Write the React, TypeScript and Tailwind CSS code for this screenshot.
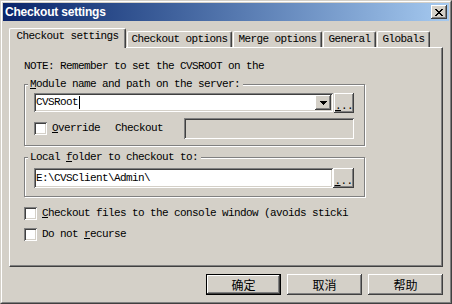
import React from "react";

const mono = "font-['Liberation_Mono',monospace] text-[11px] leading-[13px] tracking-[-0.6px] whitespace-nowrap";
const raised =
  "bg-[#d4d0c8] shadow-[inset_-1px_-1px_#404040,inset_1px_1px_#ffffff,inset_-2px_-2px_#808080,inset_2px_2px_#d4d0c8]";
const sunken =
  "shadow-[inset_1px_1px_#808080,inset_-1px_-1px_#ffffff,inset_2px_2px_#404040,inset_-2px_-2px_#d4d0c8]";
const etched = "border border-[#808080] shadow-[inset_1px_1px_#ffffff,1px_1px_#ffffff]";

function CloseGlyph() {
  const px = [
    [0, 0], [1, 0], [6, 0], [7, 0],
    [1, 1], [2, 1], [5, 1], [6, 1],
    [2, 2], [3, 2], [4, 2], [5, 2],
    [3, 3], [4, 3],
    [2, 4], [3, 4], [4, 4], [5, 4],
    [1, 5], [2, 5], [5, 5], [6, 5],
    [0, 6], [1, 6], [6, 6], [7, 6],
  ];
  return (
    <svg width="8" height="7" viewBox="0 0 8 7" shapeRendering="crispEdges">
      {px.map(([x, y]) => (
        <rect key={`${x}-${y}`} x={x} y={y} width="1" height="1" fill="#000" />
      ))}
    </svg>
  );
}

function Checkbox({ label }: { label: React.ReactNode }) {
  return (
    <div className="flex items-center">
      <div className={`w-[13px] h-[13px] bg-white ${sunken}`} />
      <span className={`${mono} ml-[5px]`}>{label}</span>
    </div>
  );
}

function BrowseButton({ w }: { w: string }) {
  return (
    <div className={`${raised} ${w} h-[20px] flex items-end justify-center pb-[3px] ${mono}`}>
      <span className="leading-[8px]">
        <u>.</u>..
      </span>
    </div>
  );
}

function Group({ label, h, children }: { label: React.ReactNode; h: string; children: React.ReactNode }) {
  return (
    <div className={`relative w-[341px] ${h} ${etched}`}>
      <span className={`${mono} absolute left-[3px] top-[-7px] bg-[#d4d0c8] pl-[2px] pr-[3px]`}>{label}</span>
      {children}
    </div>
  );
}

const tabs = [
  { label: "Checkout options", w: "w-[105px]" },
  { label: "Merge options", w: "w-[89px]" },
  { label: "General", w: "w-[53px]" },
  { label: "Globals", w: "w-[53px]" },
];

export default function App() {
  return (
    <div className="w-[452px] h-[304px] bg-[#d4d0c8] border border-t-[#d4d0c8] border-l-[#d4d0c8] border-r-[#404040] border-b-[#404040] text-black overflow-hidden select-none">
      <div className="h-full border border-t-white border-l-white border-r-[#808080] border-b-[#808080] p-[1px] flex flex-col">
        {/* title bar */}
        <div className="h-[18px] shrink-0 bg-linear-to-r from-[#0a246a] to-[#a6caf0] flex items-center justify-between pl-[2px] pr-[2px]">
          <span className="font-['Liberation_Sans',Arial,sans-serif] font-bold text-[12px] tracking-[-0.2px] text-white leading-[14px]">
            Checkout settings
          </span>
          <div className={`${raised} w-[16px] h-[14px] flex items-center justify-center`}>
            <CloseGlyph />
          </div>
        </div>

        <div className="px-[6px] pt-[7px]">
          {/* tabs */}
          <div className="flex items-end h-[19px] gap-[1px]">
            <div className="relative z-10 w-[117px] h-[20px] mb-[-1px] bg-[#d4d0c8] border-t border-l border-r border-t-white border-l-white border-r-[#404040] shadow-[inset_-1px_0_#808080] rounded-tl-[2px] rounded-tr-[2px] flex justify-center pt-[1px]">
              <span className={mono}>Checkout settings</span>
            </div>
            {tabs.map((t) => (
              <div
                key={t.label}
                className={`${t.w} h-[16px] border-t border-l border-r border-t-white border-l-white border-r-[#404040] shadow-[inset_-1px_0_#808080] rounded-tl-[2px] rounded-tr-[2px] flex justify-center pt-[1px]`}
              >
                <span className={mono}>{t.label}</span>
              </div>
            ))}
          </div>

          {/* tab panel */}
          <div className="w-[434px] h-[220px] border border-t-white border-l-white border-r-[#404040] border-b-[#404040] shadow-[inset_-1px_-1px_#808080] pl-[14px] pt-[12px]">
            <div className={mono}>NOTE: Remember to set the CVSROOT on the</div>

            <div className="mt-[11px]">
              <Group
                h="h-[62px]"
                label={
                  <>
                    <u>M</u>odule name and path on the server:
                  </>
                }
              >
                <div className="pl-[9px] pt-[8px]">
                  <div className="flex items-start gap-[1px]">
                    <div className={`w-[299px] h-[19px] bg-white ${sunken} flex items-center pl-[2px] pr-[2px]`}>
                      <span className={mono}>CVSRoot</span>
                      <span className="w-[1px] h-[13px] bg-black ml-[1px]" />
                      <div className="flex-1" />
                      <div className={`${raised} w-[16px] h-[15px] flex items-center justify-center`}>
                        <svg width="7" height="4" viewBox="0 0 7 4" shapeRendering="crispEdges">
                          <path d="M0 0h7v1h-1v1h-1v1h-1v1h-1v-1h-1v-1h-1v-1h-1z" fill="#000" />
                        </svg>
                      </div>
                    </div>
                    <BrowseButton w="w-[20px]" />
                  </div>
                  <div className="flex items-center h-[21px] mt-[5px]">
                    <Checkbox
                      label={
                        <>
                          <u>O</u>verride
                        </>
                      }
                    />
                    <span className={`${mono} ml-[15px]`}>Checkout</span>
                    <div className={`ml-[21px] w-[170px] h-[21px] ${sunken}`} />
                  </div>
                </div>
              </Group>
            </div>

            <div className="mt-[11px]">
              <Group
                h="h-[40px]"
                label={
                  <>
                    Local <u>f</u>older to checkout to:
                  </>
                }
              >
                <div className="pl-[9px] pt-[10px] flex items-start">
                  <div className={`w-[299px] h-[20px] bg-white ${sunken} flex items-center pl-[2px]`}>
                    <span className={mono}>E:\CVSClient\Admin\</span>
                  </div>
                  <BrowseButton w="w-[21px]" />
                </div>
              </Group>
            </div>

            <div className="mt-[10px]">
              <Checkbox
                label={
                  <>
                    <u>C</u>heckout files to the console window (avoids sticki
                  </>
                }
              />
            </div>
            <div className="mt-[8px]">
              <Checkbox
                label={
                  <>
                    Do not <u>r</u>ecurse
                  </>
                }
              />
            </div>
          </div>

          {/* dialog buttons */}
          <div className="w-[434px] flex justify-end gap-[6px] mt-[7px] font-['Noto_Sans_CJK_SC',sans-serif] text-[12px] leading-[14px]">
            <div className="w-[75px] h-[21px] border border-black">
              <div className={`${raised} w-full h-full flex items-center justify-center`}>确定</div>
            </div>
            <div className={`${raised} w-[75px] h-[21px] flex items-center justify-center`}>取消</div>
            <div className={`${raised} w-[75px] h-[21px] flex items-center justify-center`}>帮助</div>
          </div>
        </div>
      </div>
    </div>
  );
}
